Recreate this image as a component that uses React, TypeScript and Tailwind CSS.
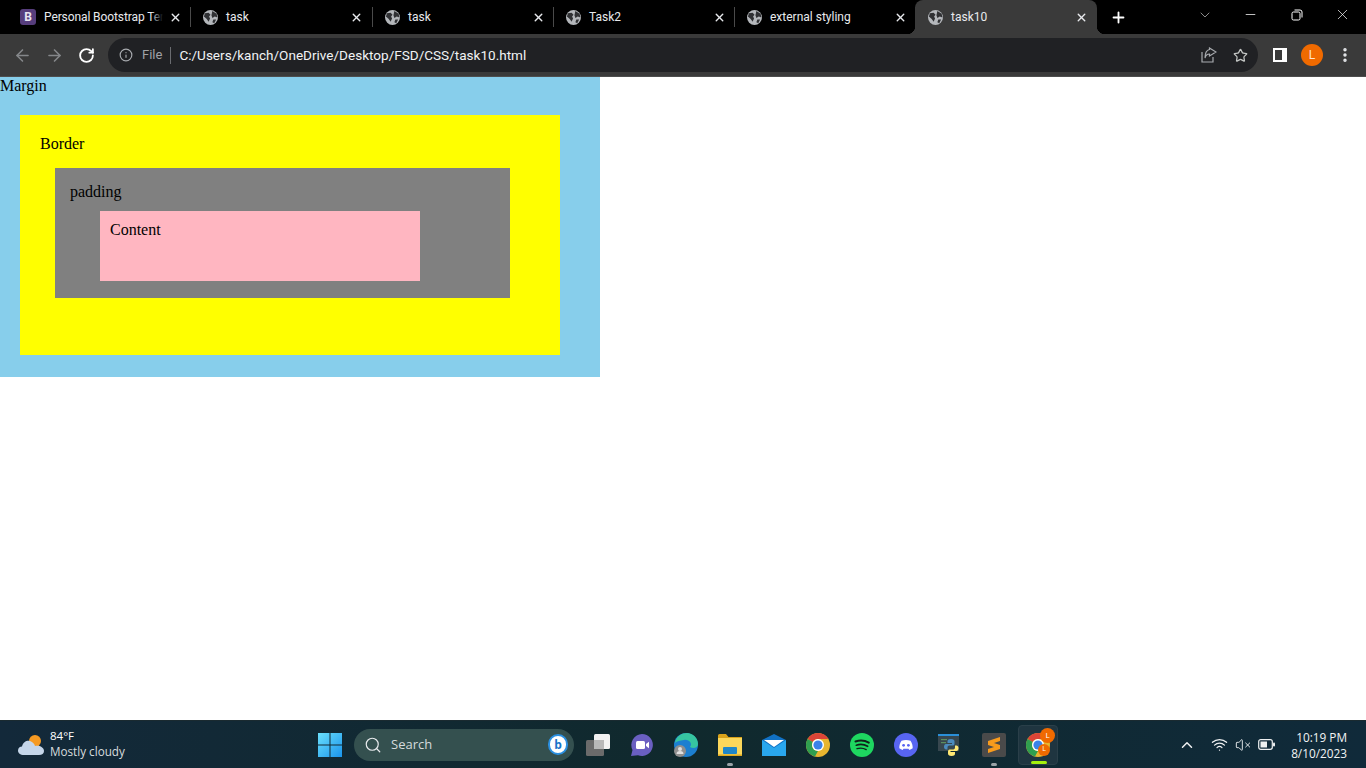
import { ArrowLeft, ArrowRight, ChevronDown, ChevronUp, Info, Minus, MoreVertical, Plus, RotateCw, Search, Star, VolumeX, Wifi, X } from 'lucide-react';

const Globe = () => (
    <svg width="15" height="15" viewBox="0 0 16 16" className="shrink-0">
        <circle cx="8" cy="8" r="8" fill="#b4b7bb" />
        <path d="M2 3.5 L6 3 L8 5 L6.5 7 L7.5 9 L6 12.5 L4 9.5 L1 7 Z" fill="#303134" />
        <path d="M10 1 L14.5 4 L15.5 8 L12.5 7 L10 8.5 L9 5.5 Z M11 10 L14 10 L12 14 L10 13 Z" fill="#303134" />
    </svg>
);

const tabs = [
    { title: 'task', w: 'w-[182px]' },
    { title: 'task', w: 'w-[181px]' },
    { title: 'Task2', w: 'w-[181px]' },
    { title: 'external styling', w: 'w-[181px]' },
];

const Tab = ({ title, w }: { title: string; w: string }) => (
    <div className={`${w} h-[34px] flex items-center pl-[13px] relative`}>
        <Globe />
        <span className="ml-[8px] text-[12px] text-[#e8eaed]">{title}</span>
        <X size={13} strokeWidth={2.6} className="absolute left-[160px] top-[11px] text-[#e8eaed]" />
        <div className="absolute right-[-1px] top-[7px] w-px h-[20px] bg-[#4a4a4a]" />
    </div>
);

const TabStrip = () => (
    <div className="h-[34px] bg-black flex items-center shrink-0">
        <div className="w-[190px] h-[34px] ml-0 flex items-center pl-[20px] relative shrink-0">
            <div className="w-[16px] h-[16px] rounded-[3px] bg-[#563d7c] text-[#e8e4f0] text-[12px] font-bold flex items-center justify-center">B</div>
            <span className="ml-[8px] w-[119px] overflow-hidden whitespace-nowrap text-[12px] tracking-[-0.1px] text-[#e8eaed]">Personal Bootstrap Ter</span>
            <div className="absolute left-[151px] top-[8px] w-[12px] h-[18px] bg-gradient-to-r from-transparent to-black" />
            <X size={13} strokeWidth={2.6} className="absolute left-[169px] top-[11px] text-[#e8eaed]" />
            <div className="absolute right-[-1px] top-[7px] w-px h-[20px] bg-[#4a4a4a]" />
        </div>
        {tabs.map((t, i) => (
            <Tab key={i} title={t.title} w={t.w} />
        ))}
        <div className="w-[182px] h-[34px] bg-[#3a3a3a] rounded-t-[8px] flex items-center pl-[13px] relative">
            <Globe />
            <span className="ml-[8px] text-[12px] text-[#e8eaed]">task10</span>
            <X size={13} strokeWidth={2.6} className="absolute left-[160px] top-[11px] text-[#e8eaed]" />
            <div className="absolute left-[-8px] bottom-0 w-[8px] h-[8px] bg-[radial-gradient(circle_at_0_0,#000_8px,#3a3a3a_8.5px)]" />
            <div className="absolute right-[-8px] bottom-0 w-[8px] h-[8px] bg-[radial-gradient(circle_at_100%_0,#000_8px,#3a3a3a_8.5px)]" />
        </div>
        <Plus size={17} strokeWidth={2.6} className="ml-[13px] text-white" />
        <div className="ml-auto flex items-center h-full pb-[5px]">
            <ChevronDown size={16} strokeWidth={1} className="text-[#d0d0d0] mr-[30px]" />
            <Minus size={15} strokeWidth={1.2} className="text-white mr-[33px]" />
            <svg width="12" height="12" viewBox="0 0 12 12" className="mr-[31px]" fill="none" stroke="#fff" strokeWidth="1">
                <rect x="1" y="3" width="8" height="8" rx="1.5" />
                <path d="M3.5 1 H9 A2 2 0 0 1 11 3 V8.5" />
            </svg>
            <X size={17} strokeWidth={1} className="text-white mr-[15px]" />
        </div>
    </div>
);

const Toolbar = () => (
    <div className="h-[43px] bg-[#3a3a3a] border-b border-[#4d4d4d] flex items-center shrink-0">
        <ArrowLeft size={19} strokeWidth={2} className="ml-[13px] text-[#85878a]" />
        <ArrowRight size={19} strokeWidth={2} className="ml-[13px] text-[#85878a]" />
        <RotateCw size={17} strokeWidth={2.6} className="ml-[14px] text-white" />
        <div className="ml-[13px] w-[1150px] h-[34px] rounded-full bg-[#202124] flex items-center pl-[11px]">
            <Info size={14} strokeWidth={2} className="text-[#a8abaf]" />
            <span className="ml-[9px] text-[13px] text-[#a0a3a7]">File</span>
            <div className="ml-[8px] w-px h-[17px] bg-[#6a6c70]" />
            <span className="ml-[8px] text-[13.55px] text-[#f1f3f4]">C:/Users/kanch/OneDrive/Desktop/FSD/CSS/task10.html</span>
            <svg width="16" height="16" viewBox="0 0 16 16" className="ml-auto" fill="none" stroke="#a8abaf" strokeWidth="1.2">
                <path d="M8.5 2.5 V1 L15 5 L8.5 9 V7 C5.5 7 4.5 9 4 11 C4 6 6 3 8.5 2.5 Z" />
                <path d="M1 5 V15 H12 V10" />
            </svg>
            <Star size={15} strokeWidth={2} className="ml-[16px] mr-[10px] text-[#c4c7c5]" />
        </div>
        <div className="ml-[15px] w-[14px] h-[14px] border-2 border-white bg-white flex">
            <div className="w-[7px] bg-[#3a3a3a]" />
        </div>
        <div className="ml-[14px] w-[22px] h-[22px] rounded-full bg-[#f06a00] text-[#ffe3cc] text-[12px] flex items-center justify-center">L</div>
        <MoreVertical size={18} strokeWidth={2.6} className="ml-[13px] text-[#e8eaed]" />
    </div>
);

const BoxModel = () => (
    <div className="flex-1 bg-white overflow-hidden font-['Liberation_Serif',serif] text-[16px] leading-[18px] text-black">
        <div className="w-[600px] h-[300px] bg-[#87ceeb] pt-0">
            Margin
            <div className="mt-5 ml-5 w-[540px] h-[240px] bg-[#ffff00] p-5">
                Border
                <div className="mt-[15px] ml-[15px] w-[455px] h-[130px] bg-[#808080] p-[15px]">
                    padding
                    <div className="mt-[10px] ml-[30px] w-[320px] h-[70px] bg-[#ffb6c1] p-[10px]">Content</div>
                </div>
            </div>
        </div>
    </div>
);

const ChromeIcon = () => (
    <svg width="24" height="24" viewBox="0 0 24 24">
        <circle cx="12" cy="12" r="12" fill="#e8b52f" />
        <path d="M12 0 A12 12 0 0 1 22.4 6 H12 A6 6 0 0 0 6.8 9 L1.6 6 A12 12 0 0 1 12 0 Z" fill="#dc4437" />
        <path d="M1.6 6 L6.8 9 A6 6 0 0 0 12 18 L9 23.6 A12 12 0 0 1 1.6 6 Z" fill="#2f9e4f" />
        <circle cx="12" cy="12" r="6" fill="#fff" />
        <circle cx="12" cy="12" r="4.6" fill="#3b82e8" />
    </svg>
);

const Slot = ({ children, dot }: { children: React.ReactNode; dot?: boolean }) => (
    <div className="w-[44px] h-[48px] flex items-center justify-center relative">
        {children}
        {dot && <div className="absolute bottom-[3px] left-[19px] w-[6px] h-[3px] rounded-full bg-[#9aa3a8]" />}
    </div>
);

const TrayIcons = () => (
    <div className="flex items-center">
        <Slot>
            <svg width="24" height="22" viewBox="0 0 24 22">
                <rect x="8" y="0" width="16" height="15" rx="1.5" fill="#f2f2f2" />
                <rect x="0" y="6" width="18" height="16" rx="1.5" fill="#6b6b6b" />
                <rect x="8" y="6" width="10" height="9" fill="#b9b9b9" />
            </svg>
        </Slot>
        <Slot>
            <svg width="24" height="24" viewBox="0 0 24 24">
                <path d="M12 1 A11 11 0 1 1 8 22.3 L1 23 L2.5 17 A11 11 0 0 1 12 1 Z" fill="#6a5fc1" />
                <rect x="6" y="8" width="9" height="8" rx="1.5" fill="#fff" />
                <path d="M16 11 L19 8.8 V15.2 L16 13 Z" fill="#fff" />
            </svg>
        </Slot>
        <Slot>
            <svg width="24" height="24" viewBox="0 0 24 24">
                <circle cx="12" cy="12" r="12" fill="#1c7fd0" />
                <path d="M1 10 C2 3 8 0 13 0 C19 0 24 5 24 11 C24 15 19 16 16 14 C19 11 15 6 10 7 C6 7.5 3 8 1 10 Z" fill="#36c5a0" />
                <circle cx="6" cy="18" r="6" fill="#8f8f8f" />
                <circle cx="6" cy="16" r="2" fill="#e0e0e0" />
                <path d="M2.5 21 A3.5 3 0 0 1 9.5 21 Z" fill="#e0e0e0" />
            </svg>
        </Slot>
        <Slot dot>
            <svg width="24" height="22" viewBox="0 0 24 22">
                <path d="M0 1.5 A1.5 1.5 0 0 1 1.5 0 H8 L10.5 3 H24 V8 H0 Z" fill="#d9a21b" />
                <rect x="0" y="4" width="24" height="18" fill="#fbd75b" />
                <rect x="5" y="13" width="14" height="7" rx="1" fill="#1f87c9" />
                <rect x="0" y="20.5" width="24" height="1.5" fill="#e0a91f" />
            </svg>
        </Slot>
        <Slot>
            <svg width="24" height="22" viewBox="0 0 24 22">
                <path d="M0 6 L12 0 L24 6 V22 H0 Z" fill="#1171c4" />
                <path d="M2 6 H22 L12 13 Z" fill="#fff" />
                <path d="M0 6 L12 14 L24 6 V22 H0 Z" fill="#29a7ee" />
            </svg>
        </Slot>
        <Slot>
            <ChromeIcon />
        </Slot>
        <Slot>
            <svg width="24" height="24" viewBox="0 0 24 24" fill="none">
                <circle cx="12" cy="12" r="12" fill="#1ed760" />
                <path d="M5.5 8.5 C10 7 15 7.5 18.8 9.6" stroke="#10201a" strokeWidth="2" strokeLinecap="round" />
                <path d="M6.3 12.2 C10 11 14.5 11.5 17.6 13.3" stroke="#10201a" strokeWidth="1.7" strokeLinecap="round" />
                <path d="M7 15.6 C10 14.8 13.5 15 16.2 16.6" stroke="#10201a" strokeWidth="1.4" strokeLinecap="round" />
            </svg>
        </Slot>
        <Slot>
            <svg width="24" height="24" viewBox="0 0 24 24">
                <circle cx="12" cy="12" r="12" fill="#5865f2" />
                <path d="M7.5 7.8 C10.5 6.7 13.5 6.7 16.5 7.8 C18 10 18.8 12.6 18.7 15.3 C17.5 16.2 16.4 16.7 15.3 17 L14.5 15.8 H9.5 L8.7 17 C7.6 16.7 6.5 16.2 5.3 15.3 C5.2 12.6 6 10 7.5 7.8 Z" fill="#fff" />
                <circle cx="9.6" cy="12.3" r="1.4" fill="#5865f2" />
                <circle cx="14.4" cy="12.3" r="1.4" fill="#5865f2" />
            </svg>
        </Slot>
        <Slot>
            <svg width="24" height="24" viewBox="0 0 24 24">
                <rect x="0" y="1" width="21" height="17" fill="#37474f" />
                <rect x="0" y="1" width="21" height="2" fill="#2a8fd8" />
                <rect x="3" y="6" width="6" height="1.2" fill="#5c8f60" />
                <rect x="3" y="9" width="5" height="1.2" fill="#5c8f60" />
                <path d="M13 6 C10 6 9.5 7 9.5 8.5 V10 H14 V11 H8 C6.5 11 6 12.5 6 14 C6 15.5 7 16.5 8 16.5 H9.5 V14.5 C9.5 13 10.5 12.5 12 12.5 H15 C16 12.5 16.5 11.5 16.5 10.5 V8.5 C16.5 7 15.5 6 13 6 Z" fill="#4b8bbe" />
                <path d="M13.5 23 C16.5 23 17 22 17 20.5 V19 H12.5 V18 H18.5 C20 18 20.5 16.5 20.5 15 C20.5 13.5 19.5 12.5 18.5 12.5 H17 V14.5 C17 16 16 16.5 14.5 16.5 H11.5 C10.5 16.5 10 17.5 10 18.5 V20.5 C10 22 11 23 13.5 23 Z" fill="#ffe873" />
            </svg>
        </Slot>
        <Slot dot>
            <div className="w-[24px] h-[24px] rounded-[2px] bg-[#4a4a4a] flex items-center justify-center">
                <svg width="14" height="18" viewBox="0 0 14 18" fill="#f89b1c">
                    <path d="M13 1 L1 5 V9 L13 5 Z" />
                    <path d="M1 5 L13 9 V13 L1 9 Z" />
                    <path d="M13 9 L1 13 V17 L13 13 Z" />
                </svg>
            </div>
        </Slot>
        <div className="w-[40px] h-[40px] ml-[2px] rounded-[4px] bg-[#1f3540] border border-[#2a3f49] flex items-center justify-center relative">
            <ChromeIcon />
            <div className="absolute top-[2px] right-[2px] w-[15px] h-[15px] rounded-full bg-[#f06a00] text-white text-[8px] flex items-center justify-center">L</div>
            <div className="absolute bottom-[8px] right-[7px] w-[12px] h-[12px] rounded-full bg-[#f06a00] text-white text-[7px] flex items-center justify-center">L</div>
            <div className="absolute bottom-0 left-[12px] w-[16px] h-[3px] rounded-full bg-[#a4f00e]" />
        </div>
    </div>
);

const Taskbar = () => (
    <div className="h-[48px] bg-gradient-to-r from-[#13293a] via-[#10292d] to-[#102a3a] border-t border-[#1a2a30] flex items-center shrink-0 font-['Open_Sans',sans-serif] text-white relative">
        <div className="w-[318px] flex items-center pl-[18px] shrink-0">
            <svg width="26" height="22" viewBox="0 0 26 22">
                <circle cx="17" cy="7" r="6" fill="#f59a23" />
                <path d="M6 21 C2 21 0 19 0 16.5 C0 14 2 12.5 4 12.5 C5 8 9 6 12 7 C15 8 16.5 10 17 12 C21 11 26 13 26 17 C26 19.5 24 21 21 21 Z" fill="#c5d6ea" />
            </svg>
            <div className="ml-[6px] pb-[2px]">
                <div className="text-[11.5px] leading-[14px] font-medium">84°F</div>
                <div className="text-[11.7px] leading-[16px] text-[#d8dcde]">Mostly cloudy</div>
            </div>
        </div>
        <svg width="24" height="24" viewBox="0 0 24 24" className="shrink-0">
            <defs>
                <linearGradient id="win" x1="0" y1="0" x2="1" y2="1">
                    <stop offset="0" stopColor="#6be0fb" />
                    <stop offset="1" stopColor="#1a94ec" />
                </linearGradient>
            </defs>
            <path d="M0 0 H11.5 V11.5 H0 Z M12.5 0 H24 V11.5 H12.5 Z M0 12.5 H11.5 V24 H0 Z M12.5 12.5 H24 V24 H12.5 Z" fill="url(#win)" />
        </svg>
        <div className="ml-[12px] w-[220px] h-[32px] rounded-full bg-[#34504f] flex items-center pl-[10px] shrink-0">
            <Search size={18} strokeWidth={1.6} className="text-[#e8eaed]" />
            <span className="ml-[9px] text-[13px] text-[#d5dbdc]">Search</span>
            <div className="ml-auto mr-[6px] w-[20px] h-[21px] rounded-full bg-white border-2 border-[#2a8fe0] flex items-center justify-center">
                <span className="text-[12px] font-bold leading-none text-[#1a73c9]">b</span>
            </div>
        </div>
        <div className="ml-[2px]">
            <TrayIcons />
        </div>
        <div className="ml-auto flex items-center">
            <ChevronUp size={18} strokeWidth={2} className="text-[#eef0f1] mr-[15px]" />
            <Wifi size={17} strokeWidth={1.8} className="text-[#eef0f1] mr-[7px]" />
            <VolumeX size={16} strokeWidth={1.4} className="text-[#eef0f1] mr-[7px]" />
            <svg width="17" height="11" viewBox="0 0 17 11" fill="none" className="mr-[16px]">
                <rect x="0.7" y="0.7" width="13.6" height="9.6" rx="2" stroke="#eef0f1" strokeWidth="1.2" />
                <rect x="2.5" y="2.5" width="6.5" height="6" fill="#eef0f1" />
                <rect x="15" y="3.5" width="2" height="4" rx="1" fill="#eef0f1" />
            </svg>
            <div className="text-right text-[11.8px] leading-[16px] text-[#f2f4f5] mr-[19px]">
                <div>10:19 PM</div>
                <div>8/10/2023</div>
            </div>
        </div>
    </div>
);

const App = () => {
    return (
        <div className="w-[1366px] h-[768px] flex flex-col overflow-hidden font-['Roboto',sans-serif]">
            <TabStrip />
            <Toolbar />
            <BoxModel />
            <Taskbar />
        </div>
    );
};

export default App;
